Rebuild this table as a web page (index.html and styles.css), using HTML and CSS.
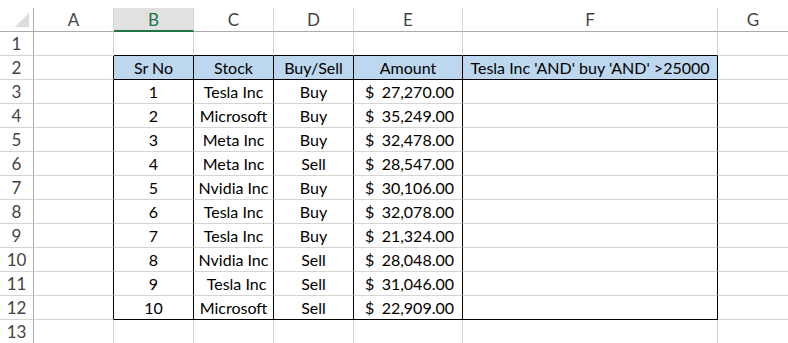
FILE: index.html
```html
<!DOCTYPE html>
<html>
<head>
<meta charset="utf-8">
<link rel="stylesheet" href="styles.css">
</head>
<body>
<div class="sheet">
  <div class="ch corner"><svg width="34" height="24" viewBox="0 0 34 24"><polygon points="30,4.5 30,19.5 15,19.5" fill="#dcdcdc"/></svg></div>
  <div class="ch">A</div>
  <div class="ch sel">B</div>
  <div class="ch">C</div>
  <div class="ch">D</div>
  <div class="ch">E</div>
  <div class="ch">F</div>
  <div class="ch">G</div>

  <div class="rh">1</div>
  <div class="c"></div><div class="c top"></div><div class="c top"></div><div class="c top"></div><div class="c top"></div><div class="c top"></div><div class="c"></div>

  <div class="rh">2</div>
  <div class="c lft"></div>
  <div class="c t hd">Sr No</div>
  <div class="c t hd">Stock</div>
  <div class="c t hd">Buy/Sell</div>
  <div class="c t hd">Amount</div>
  <div class="c t hd">Tesla Inc 'AND' buy 'AND' &gt;25000</div>
  <div class="c"></div>

  <div class="rh">3</div>
  <div class="c lft"></div><div class="c t ctr">1</div><div class="c t ctr">Tesla Inc</div><div class="c t ctr">Buy</div><div class="c t amt"><span>$</span><span>27,270.00</span></div><div class="c t"></div><div class="c"></div>

  <div class="rh">4</div>
  <div class="c lft"></div><div class="c t ctr">2</div><div class="c t ctr">Microsoft</div><div class="c t ctr">Buy</div><div class="c t amt"><span>$</span><span>35,249.00</span></div><div class="c t"></div><div class="c"></div>

  <div class="rh">5</div>
  <div class="c lft"></div><div class="c t ctr">3</div><div class="c t ctr">Meta Inc</div><div class="c t ctr">Buy</div><div class="c t amt"><span>$</span><span>32,478.00</span></div><div class="c t"></div><div class="c"></div>

  <div class="rh">6</div>
  <div class="c lft"></div><div class="c t ctr">4</div><div class="c t ctr">Meta Inc</div><div class="c t ctr">Sell</div><div class="c t amt"><span>$</span><span>28,547.00</span></div><div class="c t"></div><div class="c"></div>

  <div class="rh">7</div>
  <div class="c lft"></div><div class="c t ctr">5</div><div class="c t ctr">Nvidia Inc</div><div class="c t ctr">Buy</div><div class="c t amt"><span>$</span><span>30,106.00</span></div><div class="c t"></div><div class="c"></div>

  <div class="rh">8</div>
  <div class="c lft"></div><div class="c t ctr">6</div><div class="c t ctr">Tesla Inc</div><div class="c t ctr">Buy</div><div class="c t amt"><span>$</span><span>32,078.00</span></div><div class="c t"></div><div class="c"></div>

  <div class="rh">9</div>
  <div class="c lft"></div><div class="c t ctr">7</div><div class="c t ctr">Tesla Inc</div><div class="c t ctr">Buy</div><div class="c t amt"><span>$</span><span>21,324.00</span></div><div class="c t"></div><div class="c"></div>

  <div class="rh">10</div>
  <div class="c lft"></div><div class="c t ctr">8</div><div class="c t ctr">Nvidia Inc</div><div class="c t ctr">Sell</div><div class="c t amt"><span>$</span><span>28,048.00</span></div><div class="c t"></div><div class="c"></div>

  <div class="rh">11</div>
  <div class="c lft"></div><div class="c t ctr">9</div><div class="c t ctr lead">Tesla Inc</div><div class="c t ctr">Sell</div><div class="c t amt"><span>$</span><span>31,046.00</span></div><div class="c t"></div><div class="c"></div>

  <div class="rh">12</div>
  <div class="c lft"></div><div class="c t ctr bot">10</div><div class="c t ctr bot">Microsoft</div><div class="c t ctr bot">Sell</div><div class="c t amt bot"><span>$</span><span>22,909.00</span></div><div class="c t bot"></div><div class="c"></div>

  <div class="rh">13</div>
  <div class="c"></div><div class="c"></div><div class="c"></div><div class="c"></div><div class="c"></div><div class="c"></div><div class="c"></div>
</div>
</body>
</html>
```

FILE: styles.css
```css
* { box-sizing: border-box; }
html, body { margin: 0; padding: 0; background: #fff; }
body { padding-top: 8px; overflow: hidden; }
.sheet {
  display: grid;
  grid-template-columns: 34px 80px 80px 80px 80px 109px 255px 71px;
  grid-auto-rows: 24px;
  font-family: Lato, "Liberation Sans", sans-serif;
  font-size: 16px;
  color: #000;
}
.c, .ch, .rh {
  border-right: 1px solid #d4d4d4;
  border-bottom: 1px solid #d4d4d4;
  display: flex;
  align-items: center;
  line-height: 23px;
  white-space: nowrap;
  overflow: visible;
}
.ch {
  justify-content: center;
  color: #444;
  font-size: 17px;
  border-bottom-color: #ababab;
}
.ch.corner { border-right-color: #ababab; align-items: stretch; }
.ch.corner svg { display: block; }
.ch.sel {
  background: #e1e1e1;
  color: #217346;
  border-bottom: 2px solid #217346;
  padding-top: 1px;
}
.rh {
  justify-content: center;
  color: #444;
  font-size: 17px;
  border-right-color: #ababab;
}
.top { border-bottom-color: #000; }
.lft { border-right-color: #000; }
.t { border-right-color: #000; }
.hd {
  background: #bdd7ee;
  border-bottom-color: #000;
  justify-content: center;
}
.ctr { justify-content: center; }
.lead { padding-left: 6px; }
.amt { justify-content: space-between; padding: 0 8px 0 11px; }
.bot { border-bottom-color: #000; }
```
